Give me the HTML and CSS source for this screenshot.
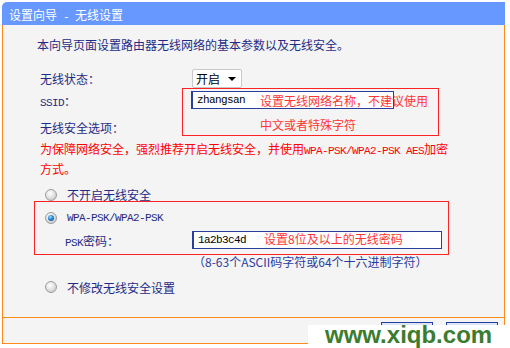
FILE: index.html
```html
<!DOCTYPE html>
<html lang="zh-CN">
<head>
    <meta charset="UTF-8">
    <meta name="viewport" content="width=device-width, initial-scale=1.0">
    <title>设置向导 - 无线设置</title>
    <link rel="stylesheet" href="styles.css">
</head>
<body>
    <div class="panel">
        <div class="titulo">设置向导<span class="en"> - </span>无线设置</div>
        <div class="cuerpo">
            <p class="intro">本向导页面设置路由器无线网络的基本参数以及无线安全。</p>

            <div class="fila fila-estado">
                <span class="etiqueta">无线状态：</span>
                <span class="selector">开启<i class="flecha"></i></span>
            </div>
            <div class="fila">
                <span class="etiqueta"><span class="en">SSID</span>：</span>
                <span class="campo campo-ssid en">zhangsan</span>
            </div>
            <div class="fila fila-seguridad">
                <span class="etiqueta">无线安全选项：</span>
            </div>
            <p class="aviso">为保障网络安全，强烈推荐开启无线安全，并使用<span class="en">WPA-PSK/WPA2-PSK AES</span>加密方式。</p>

            <div class="fila opcion opcion-primera"><i class="radio"></i>不开启无线安全</div>
            <div class="fila opcion"><i class="radio activo"></i><span class="en">WPA-PSK/WPA2-PSK</span></div>
            <div class="fila">
                <span class="etiqueta sub"><span class="en">PSK</span>密码：</span>
                <span class="campo campo-psk en">1a2b3c4d</span>
            </div>
            <div class="pista">（8-63个ASCII码字符或64个十六进制字符）</div>
            <div class="fila opcion opcion-ultima"><i class="radio"></i>不修改无线安全设置</div>

            <!-- anotaciones en rojo encima del formulario -->
            <div class="marca marca-ssid">设置无线网络名称，不建议使用<br>中文或者特殊字符</div>
            <div class="marca marca-wpa"></div>
            <div class="nota nota-psk">设置8位及以上的无线密码</div>
        </div>
        <div class="pie">
            <button class="boton">上一步</button>
            <button class="boton">下一步</button>
        </div>
    </div>
    <div class="sello">www.xiqb.com</div>
</body>
</html>
```

FILE: styles.css
```css
html{
    background: #fff;
    overflow: hidden;
}

body{
    margin: 0;
    font-family: "Noto Sans CJK SC", sans-serif;
    font-size: 12px;
    color: #1f2b84;
    position: relative;
    height: 348px;
}

.en{
    font-family: "Liberation Mono", monospace;
    font-size: 11px;
    letter-spacing: -0.6px;
    white-space: pre;
}

.panel{
    width: 503px;
    margin: 2px 0 0 2px;
}

.titulo{
    height: 23px;
    line-height: 25px;
    padding-left: 7px;
    background: #6698ff;
    color: #fff;
    border-radius: 5px 0 0 0;
}

.cuerpo{
    position: relative;
    height: 292px;
    box-sizing: border-box;
    padding: 11px 0 0 37px;
    background: #f4f4f4;
    border-left: 1px solid #ff8a1c;
    border-right: 1px solid #ff8a1c;
}

.intro{
    margin: 0 0 0 -3px;
    line-height: 17px;
}

.fila{
    display: flex;
    align-items: center;
    height: 22px;
}
.fila-estado{
    margin-top: 14px;
}
.fila-seguridad{
    margin-top: 5px;
}

.etiqueta{
    width: 152px;
    flex: none;
}
.etiqueta.sub{
    width: 127px;
    margin-left: 25px;
}

.selector{
    display: flex;
    align-items: center;
    width: 50px;
    height: 19px;
    box-sizing: border-box;
    padding-left: 3px;
    background: #fff;
    border: 1px solid #c9c9c9;
    border-radius: 2px;
    color: #000;
}
.flecha{
    margin: 1px 5px 0 auto;
    border-left: 4px solid transparent;
    border-right: 4px solid transparent;
    border-top: 4px solid #000;
}

.campo{
    height: 18px;
    line-height: 16px;
    box-sizing: border-box;
    padding-left: 4px;
    background: #fff;
    border: 1px solid #2a3f9c;
    border-left-width: 2px;
    color: #000;
}
.campo-ssid{
    width: 203px;
    margin-left: -1px;
}
.campo-psk{
    width: 250px;
}

.aviso{
    width: 414px;
    margin: 2px 0 0;
    line-height: 17px;
    color: #ff0000;
}
.aviso .en{
    white-space: normal;
}

.opcion{
    height: 23px;
    padding-left: 5px;
}
.opcion-primera{
    margin-top: 6px;
}
.opcion-ultima{
    margin-top: 6px;
    height: 22px;
}

.radio{
    position: relative;
    width: 10px;
    height: 10px;
    margin-right: 10px;
    border: 1px solid #9c9c9c;
    border-radius: 50%;
    background: radial-gradient(circle at 40% 35%, #ffffff, #e4e4e4 45%, #b9b9b9);
}
.radio.activo::after{
    content: "";
    position: absolute;
    left: 2px;
    top: 2px;
    width: 6px;
    height: 6px;
    border-radius: 50%;
    background: radial-gradient(circle at 40% 35%, #9fe0ff, #1c7fd0 50%, #0a3f7a);
}

.pista{
    margin-top: 2px;
    padding-left: 153px;
    line-height: 17px;
    color: #2c3c9e;
}

.marca{
    position: absolute;
    border: 1px solid #ff2222;
}
.marca-ssid{
    left: 179px;
    top: 63px;
    padding-left: 77px;
    box-sizing: border-box;
    width: 257px;
    height: 48px;
    line-height: 24px;
    color: #ff3535;
}
.marca-wpa{
    left: 31px;
    top: 176px;
    width: 413px;
    height: 52px;
}

.nota{
    position: absolute;
    line-height: 16px;
    color: #ff3535;
}
.nota-psk{
    left: 261px;
    top: 206px;
}

.pie{
    display: flex;
    justify-content: flex-end;
    gap: 13px;
    padding: 4px 6px 0 0;
    box-sizing: border-box;
    height: 27px;
    background: #f4f4f4;
    border: 1px solid #ff8a1c;
}

.boton{
    width: 52px;
    height: 20px;
    padding: 0;
    font-family: "Noto Sans CJK SC", sans-serif;
    font-size: 12px;
    color: #1f2b84;
    background: #dde4f6;
    border: 1px solid #2140a4;
}

.sello{
    position: absolute;
    left: 308px;
    top: 325px;
    width: 185px;
    height: 23px;
    padding-left: 17px;
    background: #fff;
    font-family: "Liberation Sans", sans-serif;
    font-weight: bold;
    font-size: 24px;
    line-height: 20px;
    color: #3b7c2f;
}
```
